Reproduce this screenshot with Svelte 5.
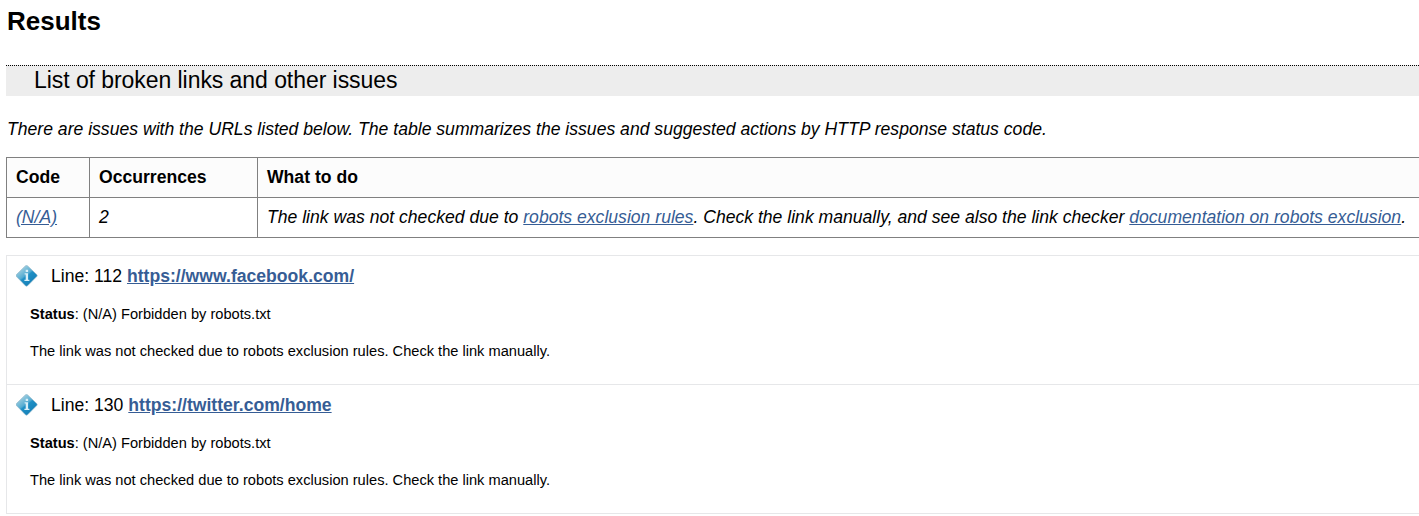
<script>
  const issues = [
    { line: 112, url: 'https://www.facebook.com/' },
    { line: 130, url: 'https://twitter.com/home' }
  ];
</script>

<main>
  <h2>Results</h2>
  <h3>List of broken links and other issues</h3>
  <p class="summary">There are issues with the URLs listed below. The table summarizes the issues and suggested actions by HTTP response status code.</p>

  <div class="table">
    <div class="row head">
      <div>Code</div>
      <div>Occurrences</div>
      <div>What to do</div>
    </div>
    <div class="row data">
      <div><a href="#issues">(N/A)</a></div>
      <div>2</div>
      <div>The link was not checked due to <a href="#robots">robots exclusion rules</a>. Check the link manually, and see also the link checker <a href="#docs">documentation on robots exclusion</a>.</div>
    </div>
  </div>

  <ul id="issues">
    {#each issues as issue}
      <li>
        <div class="title">
          <svg width="22" height="22" viewBox="0 0 22 22" aria-hidden="true">
            <defs>
              <linearGradient id="info-{issue.line}" x1="0.25" y1="0.15" x2="0.75" y2="0.8">
                <stop offset="0" stop-color="#9accdf" />
                <stop offset="0.45" stop-color="#55acd2" />
                <stop offset="0.55" stop-color="#1f8fc5" />
                <stop offset="1" stop-color="#1783ba" />
              </linearGradient>
            </defs>
            <path d="M9.4 .9Q10.5 0 11.6 .9L20.7 9.6Q21.6 10.6 20.7 11.6L11.6 20.7Q10.5 21.6 9.4 20.7L.5 11.6Q-.4 10.6 .5 9.6Z" fill="url(#info-{issue.line})" stroke="#8db4c8" stroke-width="0.7" />
            <path d="M9.7 4.7h2.4v2.2H9.7zM8.6 8.2h3.5v6.6h1.3V16H8.4v-1.2h1.3V9.4H8.6z" fill="#d9eff8" />
          </svg>
          <span class="text">Line: {issue.line} <a href={issue.url}>{issue.url}</a></span>
        </div>
        <p><b>Status</b>: (N/A) Forbidden by robots.txt</p>
        <p>The link was not checked due to robots exclusion rules. Check the link manually.</p>
      </li>
    {/each}
  </ul>
</main>

<style>
  :global(body) {
    background: #fff;
    overflow: hidden;
  }
  main {
    height: 516px;
    padding-left: 6px;
    overflow: hidden;
    box-sizing: border-box;
    color: #000;
    font-family: "Liberation Sans", Arial, sans-serif;
    font-size: 17.6px;
    white-space: nowrap;
  }
  h2 {
    margin: 0;
    height: 65px;
    padding: 6px 0 0 1px;
    box-sizing: border-box;
    font-size: 26px;
    line-height: 30px;
  }
  h3 {
    margin: 0;
    height: 31px;
    box-sizing: border-box;
    border-top: 1px dotted #000;
    background: #ededed;
    padding-left: 28px;
    font-size: 23px;
    letter-spacing: -0.06px;
    font-weight: 400;
    line-height: 28px;
  }
  .summary {
    margin: 22px 0 17px;
    padding-left: 1px;
    line-height: 22px;
    font-style: italic;
  }
  a {
    color: #365d95;
    text-decoration: underline;
  }
  .table {
    border: 1px solid #808080;
    border-right: 0;
  }
  .row {
    display: grid;
    grid-template-columns: 83px 168px 1fr;
    height: 39px;
    line-height: 39px;
  }
  .row div {
    padding-left: 9px;
  }
  .row div + div {
    border-left: 1px solid #808080;
    margin-left: -1px;
  }
  .head {
    font-weight: 700;
    background: #fcfcfc;
    border-bottom: 1px solid #808080;
  }
  .data {
    font-style: italic;
  }
  ul {
    list-style: none;
    margin: 17px 0 0;
    padding: 0;
    border: 1px solid #e6e7e9;
    border-right: 0;
  }
  li {
    height: 128px;
    box-sizing: border-box;
    padding-top: 9px;
  }
  li + li {
    height: 129px;
    border-top: 1px solid #e6e7e9;
  }
  .title {
    display: flex;
    align-items: center;
    gap: 13px;
    height: 22px;
    padding-left: 9px;
    margin-bottom: 16px;
  }
  .title a {
    font-weight: 700;
  }
  svg {
    display: block;
  }
  li p {
    margin: 0 0 15px;
    padding-left: 23px;
    font-size: 14.63px;
    line-height: 22px;
  }
</style>
